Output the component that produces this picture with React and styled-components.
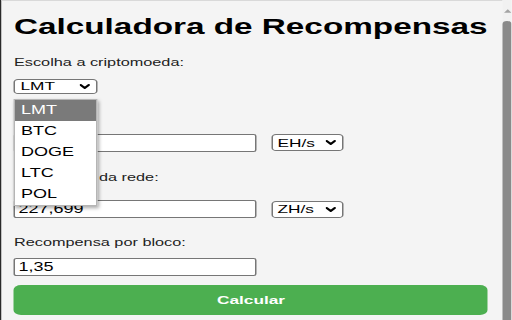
import React from "react";
import styled, { createGlobalStyle } from "styled-components";

// the captured popup is stretched horizontally, so the layout is drawn
// in natural width and widened by SCALE
const SCALE = 1.5;
const nx = (px) => `${px / SCALE}px`;

const GlobalStyle = createGlobalStyle`
  html, body {
    margin: 0;
    padding: 0;
    background: #f4f4f4;
    overflow: hidden;
  }
  body {
    font-family: "Liberation Sans", Arial, sans-serif;
  }
`;

const Stage = styled.div`
  width: ${nx(512)};
  height: 320px;
  display: flex;
  transform: scaleX(${SCALE});
  transform-origin: 0 0;
  overflow: hidden;
`;

const PageEdge = styled.div`
  width: ${nx(2)};
  flex-shrink: 0;
  background: #2a2a2a;
`;

const Popup = styled.div`
  flex: 1;
  min-width: 0;
  box-sizing: border-box;
  background: #f4f4f4;
  border-top: 1px solid #d9d9d9;
  padding: 13px ${nx(14)} 0 ${nx(12)};
  display: flex;
  flex-direction: column;
`;

const Title = styled.h1`
  margin: 0;
  font-size: 22.2px;
  line-height: 26px;
  font-weight: 700;
  color: #000;
  white-space: nowrap;
`;

const Label = styled.div`
  margin-top: ${(p) => p.$top}px;
  font-size: 10.85px;
  line-height: 13px;
  color: #222;
  white-space: nowrap;
`;

const Row = styled.div`
  margin-top: ${(p) => p.$top}px;
  display: flex;
  align-items: center;
  gap: ${nx(14)};
`;

const TextInput = styled.input`
  box-sizing: border-box;
  width: ${nx(243)};
  height: 18px;
  margin: 0;
  padding: 0 2px;
  border: 1px solid #767676;
  border-radius: 2px;
  background: #fff;
  font-family: "Liberation Sans", Arial, sans-serif;
  font-size: 12px;
  color: #000;
  outline: none;
`;

const SelectWrap = styled.div`
  position: relative;
`;

const SelectBox = styled.div`
  box-sizing: border-box;
  width: ${(p) => nx(p.$w)};
  height: ${(p) => p.$h}px;
  padding: 0 ${nx(6)} 0 ${nx(5)};
  border: 1px solid #767676;
  border-radius: 3px;
  background: #fff;
  display: flex;
  align-items: center;
  justify-content: space-between;
  font-size: 11.5px;
  color: #000;
`;

const Chevron = () => (
  <svg width={7} height={5} viewBox="0 0 10 6" preserveAspectRatio="none">
    <path d="M1.2 1.2 L5 4.8 L8.8 1.2" fill="none" stroke="#000" strokeWidth="2.2" strokeLinecap="round" strokeLinejoin="round" />
  </svg>
);

const Dropdown = styled.ul`
  position: absolute;
  top: 20px;
  left: 0;
  z-index: 5;
  box-sizing: border-box;
  width: ${nx(84)};
  margin: 0;
  padding: 0;
  list-style: none;
  background: #fff;
  border: 1px solid #b5b5b5;
  box-shadow: 1px 2px 3px rgba(0, 0, 0, 0.35);
`;

const Option = styled.li`
  height: 21px;
  line-height: 21px;
  padding-left: ${nx(5.5)};
  font-size: 12px;
  color: ${(p) => (p.$active ? "#fff" : "#000")};
  background: ${(p) => (p.$active ? "#7a7a7a" : "transparent")};
`;

const Button = styled.button`
  margin-top: 9.3px;
  height: 30px;
  width: 100%;
  border: none;
  border-radius: 5px;
  background: #4caf50;
  color: #fff;
  font-family: "Liberation Sans", Arial, sans-serif;
  font-size: 11.5px;
  font-weight: 700;
  padding: 0;
`;

const Scrollbar = styled.div`
  width: ${nx(10)};
  flex-shrink: 0;
  background: #f1f1f1;
  display: flex;
  flex-direction: column;
  align-items: center;
`;

const ScrollArrow = styled.div`
  height: 21px;
  box-sizing: border-box;
  padding-top: 9px;
  display: flex;
  justify-content: center;
`;

const ScrollThumb = styled.div`
  flex: 1;
  width: ${nx(9)};
  background: #8a8a8a;
  border-radius: 3px 3px 0 0;
`;

const coins = ["LMT", "BTC", "DOGE", "LTC", "POL"];

export default function App() {
  return (
    <>
      <GlobalStyle />
      <Stage>
        <PageEdge />
        <Popup>
          <Title>Calculadora de Recompensas</Title>

          <Label $top={15.7}>Escolha a criptomoeda:</Label>
          <Row $top={10.3}>
            <SelectWrap>
              <SelectBox $w={84} $h={15}>
                <span>LMT</span>
                <Chevron />
              </SelectBox>
              <Dropdown>
                {coins.map((c, i) => (
                  <Option key={c} $active={i === 0}>
                    {c}
                  </Option>
                ))}
              </Dropdown>
            </SelectWrap>
          </Row>

          <Label $top={18.4}>Hashrate:</Label>
          <Row $top={8.6}>
            <TextInput readOnly defaultValue="" />
            <SelectBox $w={72} $h={17}>
              <span>EH/s</span>
              <Chevron />
            </SelectBox>
          </Row>

          <Label $top={18.7}>Dificuldade da rede:</Label>
          <Row $top={16.6}>
            <TextInput readOnly defaultValue="227,699" />
            <SelectBox $w={72} $h={17}>
              <span>ZH/s</span>
              <Chevron />
            </SelectBox>
          </Row>

          <Label $top={17.9}>Recompensa por bloco:</Label>
          <Row $top={8.5}>
            <TextInput readOnly defaultValue="1,35" />
          </Row>

          <Button>Calcular</Button>
        </Popup>
        <Scrollbar>
          <ScrollArrow>
            <svg width={5} height={4} viewBox="0 0 6 4">
              <path d="M3 0 L6 4 L0 4 Z" fill="#a3a3a3" />
            </svg>
          </ScrollArrow>
          <ScrollThumb />
        </Scrollbar>
      </Stage>
    </>
  );
}
